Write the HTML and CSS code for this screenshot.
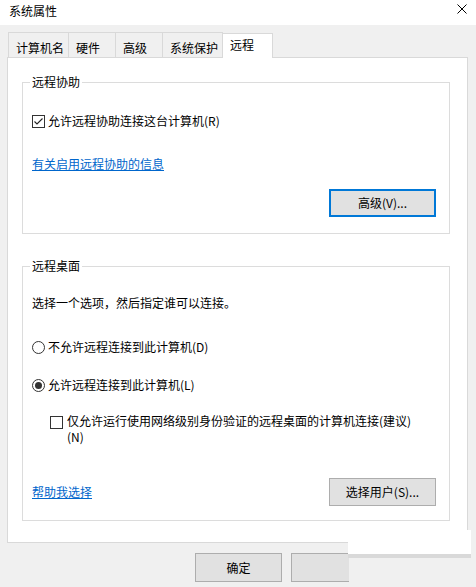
FILE: index.html
```html
<!DOCTYPE html>
<html lang="zh-CN">
<head>
<meta charset="utf-8">
<title>系统属性</title>
<link rel="stylesheet" href="styles.css">
</head>
<body>
<div class="window">
  <div class="titlebar">
    <span class="title">系统属性</span>
    <svg class="close" width="10" height="10" viewBox="0 0 10 10"><path d="M0.5 0.5 L9.5 9.5 M9.5 0.5 L0.5 9.5" stroke="#000" stroke-width="1" fill="none"/></svg>
  </div>
  <div class="tabs">
    <div class="tab">计算机名</div>
    <div class="tab">硬件</div>
    <div class="tab">高级</div>
    <div class="tab">系统保护</div>
    <div class="tab tab-active">远程</div>
  </div>
  <div class="panel">
    <div class="group group-assist">
      <div class="group-title">远程协助</div>
      <div class="option option-first">
        <span class="checkbox checked"><svg width="11" height="11" viewBox="0 0 11 11"><path d="M1.5 5.5 L4 8 L9.5 2.5" stroke="#222" stroke-width="1.1" fill="none"/></svg></span>
        <span>允许远程协助连接这台计算机(R)</span>
      </div>
      <a class="link link-info" href="#">有关启用远程协助的信息</a>
      <div class="row-end">
        <button class="btn btn-focus">高级(V)...</button>
      </div>
    </div>
    <div class="group group-desktop">
      <div class="group-title">远程桌面</div>
      <div class="hint">选择一个选项，然后指定谁可以连接。</div>
      <div class="option option-radio1">
        <span class="radio"></span>
        <span>不允许远程连接到此计算机(D)</span>
      </div>
      <div class="option option-radio2">
        <span class="radio selected"></span>
        <span>允许远程连接到此计算机(L)</span>
      </div>
      <div class="option option-nla">
        <span class="checkbox"></span>
        <span class="nla-text">仅允许运行使用网络级别身份验证的远程桌面的计算机连接(建议)<br>(N)</span>
      </div>
      <div class="row-between">
        <a class="link" href="#">帮助我选择</a>
        <button class="btn">选择用户(S)...</button>
      </div>
    </div>
  </div>
  <div class="footer">
    <button class="btn btn-footer">确定</button>
    <button class="btn btn-footer btn-cut"></button>
  </div>
  <div class="mask"></div>
</div>
</body>
</html>
```

FILE: styles.css
```css
* {
  box-sizing: border-box;
}

html, body {
  margin: 0;
  padding: 0;
}

body {
  background: #f0f0f0;
  font-family: "Noto Sans CJK SC", "Microsoft YaHei", sans-serif;
  font-size: 12px;
  line-height: 16px;
  color: #000;
  width: 476px;
  height: 587px;
  overflow: hidden;
}

.window {
  position: relative;
  width: 476px;
  height: 587px;
}

.titlebar {
  height: 25px;
  background: #fff;
  display: flex;
  align-items: flex-start;
  padding: 3px 9px 0 9px;
}

.title {
  line-height: 16px;
}

.close {
  margin-left: auto;
  margin-top: 1px;
  margin-right: 0;
}

.tabs {
  display: flex;
  align-items: flex-start;
  margin-top: 7px;
  padding-left: 8px;
  height: 25px;
}

.tab {
  height: 25px;
  min-width: 48px;
  padding: 7px 4px 0 7px;
  border: 1px solid #d9d9d9;
  border-bottom: none;
  margin-left: -1px;
  background: #f0f0f0;
  white-space: nowrap;
}

.tab:first-child {
  margin-left: 0;
}

.tab-active {
  position: relative;
  z-index: 2;
  background: #fff;
  height: 25px;
  margin-top: 1px;
  min-width: 51px;
  padding-top: 3px;
}

.panel {
  margin-left: 7px;
  width: 461px;
  height: 486px;
  background: #fff;
  border: 1px solid #d9d9d9;
  padding: 24px 17px 0 14px;
}

.group {
  border: 1px solid #dcdcdc;
  padding: 0 0 0 9px;
  display: flex;
  flex-direction: column;
  align-items: flex-start;
}

.group-assist {
  padding-bottom: 16px;
}

.group-desktop {
  margin-top: 32px;
  padding-bottom: 14px;
}

.group-title {
  margin: -9px 0 0 -2px;
  padding: 0 2px;
  background: #fff;
  line-height: 16px;
}

.option {
  display: flex;
  align-items: center;
  gap: 3px;
  line-height: 16px;
}

.option-first {
  margin-top: 23px;
}

.option-radio1 {
  margin-top: 28px;
}

.option-radio2 {
  margin-top: 22px;
}

.option-nla {
  margin-top: 20px;
  margin-left: 18px;
  align-items: flex-start;
  gap: 4px;
}

.option-nla .checkbox {
  margin-top: 3px;
}

.checkbox {
  width: 13px;
  height: 13px;
  border: 1px solid #333;
  background: #fff;
  display: flex;
  align-items: center;
  justify-content: center;
  flex: none;
}

.radio {
  width: 13px;
  height: 13px;
  border: 1px solid #333;
  border-radius: 50%;
  background: #fff;
  display: flex;
  align-items: center;
  justify-content: center;
  flex: none;
}

.radio.selected::after {
  content: "";
  width: 7px;
  height: 7px;
  border-radius: 50%;
  background: #333;
}

.link {
  color: #0066cc;
  text-decoration: underline;
  line-height: 16px;
}

.link-info {
  margin-top: 27px;
}

.hint {
  margin-top: 21px;
}

.row-end {
  align-self: stretch;
  display: flex;
  justify-content: flex-end;
  margin-top: 17px;
  padding-right: 13px;
}

.row-between {
  align-self: stretch;
  display: flex;
  justify-content: space-between;
  align-items: center;
  margin-top: 33px;
  padding-right: 13px;
}

.btn {
  font-family: inherit;
  font-size: 12px;
  line-height: 16px;
  color: #000;
  width: 107px;
  height: 28px;
  background: #e1e1e1;
  border: 1px solid #adadad;
  padding: 0;
  margin: 0;
}

.btn-focus {
  border: 2px solid #0078d7;
}

.footer {
  display: flex;
  gap: 9px;
  padding-left: 195px;
  margin-top: 10px;
}

.btn-footer {
  width: 87px;
  height: 29px;
}

.btn-cut {
  width: 58px;
  border-right: none;
}

.mask {
  position: absolute;
  left: 348px;
  top: 530px;
  width: 123px;
  height: 28px;
  background: #fff;
  border-bottom: 4px solid #d9d9d9;
}
```
